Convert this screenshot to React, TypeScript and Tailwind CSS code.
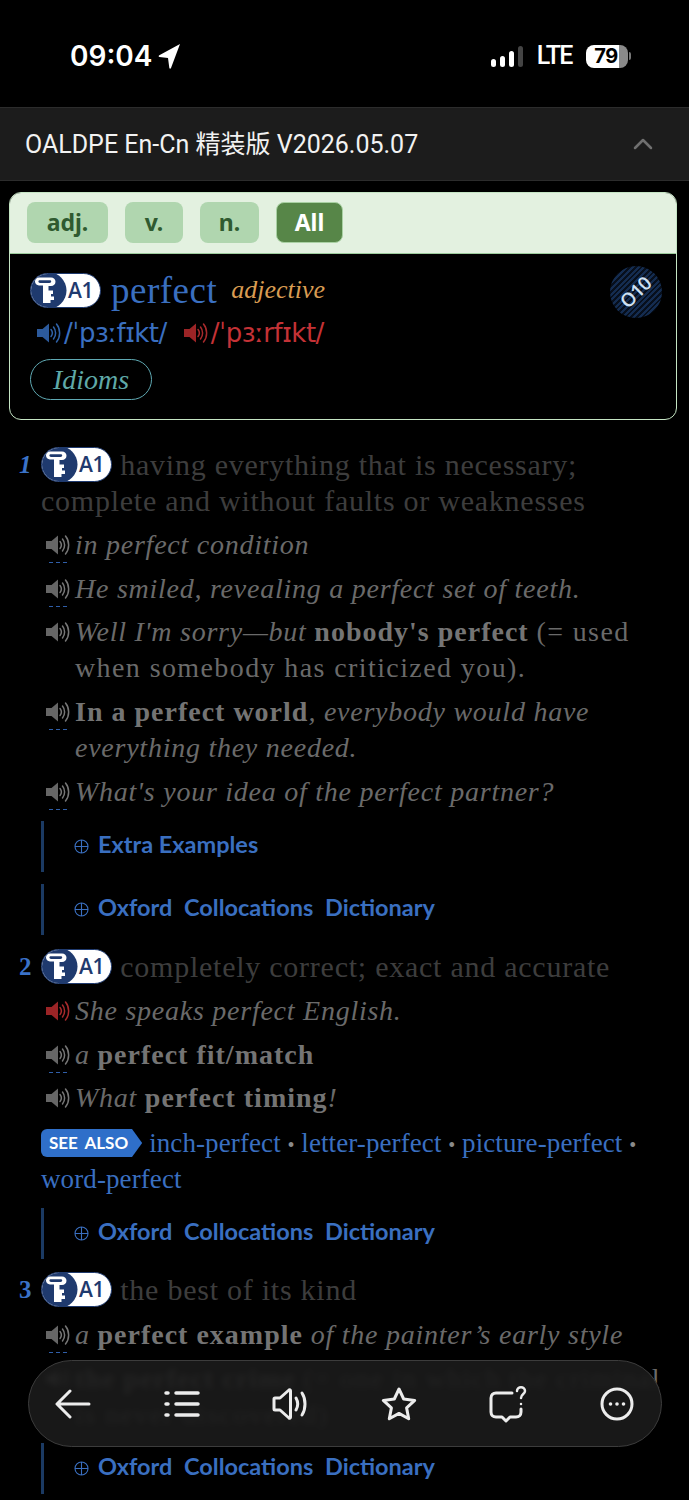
import type { ReactNode } from "react";

const SERIF = "font-['Liberation_Serif','Noto_Serif',serif]";

const Speaker = ({ cone = "#666666", arcs = "#777777" }: { cone?: string; arcs?: string }) => (
  <svg width="26" height="24" viewBox="0 0 26 24" fill="none">
    <path d="M1 8h5.500L13 2.500v19L6.500 16H1z" fill={cone} />
    <path d="M15 8.500c1.600 2 1.600 5 0 7" stroke={arcs} strokeWidth="1.500" strokeLinecap="round" />
    <path d="M17.500 6c2.800 3.400 2.800 8.600 0 12" stroke={arcs} strokeWidth="1.500" strokeLinecap="round" />
    <path d="M20.500 3c4.200 5 4.200 13 0 18" stroke={arcs} strokeWidth="1.500" strokeLinecap="round" />
  </svg>
);

const KeyBadge = () => (
  <span className="inline-block align-[-7px] relative w-[71px] h-[35px] rounded-full bg-white border border-[#1f3a6e] overflow-hidden">
    <svg className="absolute left-0 top-0" width="38" height="33" viewBox="0 0 38 33">
      <circle cx="17" cy="16.500" r="18.500" fill="#1f3a6e" />
      <path
        d="M8 3.500h12c2.600 0 4.500 1.800 4.500 4.200S22.600 12 20 12h-2.500v4.500H22V20h-2v2.500h3V26h-3.500v3H12V11.500H8c-2.300 0-4-1.700-4-3.900s1.700-4.100 4-4.100zm1 2.700c-1 0-1.600.5-1.600 1.400S8 9 9 9h9.500c1.100 0 1.700-.5 1.700-1.400s-.6-1.400-1.700-1.400z"
        fill="#ffffff"
        fillRule="evenodd"
      />
    </svg>
    <span className="absolute left-[37px] top-[3px] font-['Open_Sans',sans-serif] font-semibold text-[21px] leading-[27px] tracking-[-0.5px] text-[#1f3a6e]">
      A1
    </span>
  </span>
);

const Example = ({
  children,
  red,
  dash = true,
  tight,
}: {
  children: ReactNode;
  red?: boolean;
  dash?: boolean;
  tight?: boolean;
}) => (
  <div className={`flex pl-[45px] pr-[20px] ${tight ? "mt-[7px]" : "mt-2"}`}>
    <div className="w-[30px] shrink-0 h-9 flex flex-col">
      <div className="mt-[6px]">
        {red ? <Speaker cone="#9b2426" arcs="#a82a2c" /> : <Speaker />}
      </div>
      {dash && (
        <div className="mt-auto ml-1 flex gap-[3px]">
          <div className="w-[4px] h-px bg-[#2f5ea8]" />
          <div className="w-[4px] h-px bg-[#2f5ea8]" />
          <div className="w-[4px] h-px bg-[#2f5ea8]" />
        </div>
      )}
    </div>
    <p className={`${SERIF} text-[28px] leading-9 italic text-[#6a6a6a] tracking-[0.75px]`}>{children}</p>
  </div>
);

const B = ({ children }: { children: ReactNode }) => (
  <b className="not-italic font-bold text-[#747474] tracking-[1px]">{children}</b>
);

const Gloss = ({ children }: { children: ReactNode }) => (
  <span className="not-italic tracking-[1.4px]">{children}</span>
);

const Sense = ({ n, italicNum, children }: { n: string; italicNum?: boolean; children: ReactNode }) => (
  <div className="flex">
    <div
      className={`w-[41px] shrink-0 pl-[19px] ${SERIF} text-[25px] leading-9 font-bold text-[#3a72c8] ${italicNum ? "italic" : ""}`}
    >
      {n}
    </div>
    <p className={`${SERIF} text-[30px] leading-9 text-[#3d3d3d] tracking-[0.75px] pr-[60px]`}>
      <KeyBadge /> {children}
    </p>
  </div>
);

const Extra = ({ label, tight }: { label: string; tight?: boolean }) => (
  <div className="ml-[41px] h-[51px] border-l-[3px] border-[#1b3a63] flex items-center pl-[30px] pb-[3px]">
    <svg className="mr-[9px] mt-[2px]" width="15" height="15" viewBox="0 0 15 15" fill="none" stroke="#3a6fc0" strokeWidth="1.100">
      <circle cx="7.500" cy="7.500" r="6.500" />
      <path d="M7.500 1v13M1 7.500h13" />
    </svg>
    <span
      className={`font-['Lato',sans-serif] font-bold text-[23.500px] leading-none text-[#3a6fc0] ${
        tight ? "[word-spacing:0px]" : "[word-spacing:6px]"
      }`}
    >
      {label}
    </span>
  </div>
);

const Pill = ({ label, w, active }: { label: string; w: string; active?: boolean }) => (
  <div
    className={`${w} h-[41px] rounded-lg flex items-center justify-center font-['Noto_Sans',sans-serif] font-bold text-[23px] ${
      active ? "bg-[#578648] text-white border border-[#a9d1a3]" : "bg-[#b0d6af] text-[#2f5a30]"
    }`}
  >
    {label}
  </div>
);

const Link = ({ children }: { children: ReactNode }) => (
  <span className="whitespace-nowrap text-[#3a6fc0] tracking-[0.1px]">{children}</span>
);
const Dot = () => <span className="text-[#8a8a8a] text-[20px] leading-none">•</span>;

export default function App() {
  return (
    <div className="relative w-[689px] h-[1500px] overflow-hidden bg-black">
      {/* status bar */}
      <div className="h-[107px] flex items-start justify-between pt-[38px] pl-[70px] pr-[58px]">
        <div className="flex items-center gap-[6px] text-white font-['Inter',sans-serif] font-semibold text-[28px] leading-9">
          09:04
          <svg width="23" height="26" viewBox="0 0 23 26">
            <path d="M22 1 13 25c-.5 1-1.500.8-1.700-.2L10 15 1.500 14c-1-.2-1.200-1.200-.2-1.700z" fill="#ffffff" />
          </svg>
        </div>
        <div className="flex items-center h-9 text-white">
          <div className="flex items-end gap-1 h-[21px] mt-[1px]">
            <div className="w-[5px] h-[8px] rounded-sm bg-white" />
            <div className="w-[5px] h-[11px] rounded-sm bg-white" />
            <div className="w-[5px] h-[16px] rounded-sm bg-white" />
            <div className="w-[5px] h-[21px] rounded-sm bg-[#444444]" />
          </div>
          <span className="ml-[14px] font-['Roboto',sans-serif] font-medium text-[25px] tracking-[-1.5px]">LTE</span>
          <div className="ml-[14px] w-[42px] h-[23px] rounded-[8px] bg-[linear-gradient(90deg,#ffffff_78%,#8a8a8a_78%)] flex items-center justify-center text-black font-['Inter',sans-serif] font-bold text-[20px] tracking-[-0.5px]">
            <span className="mr-[2px]">79</span>
          </div>
          <div className="ml-[1px] w-[2px] h-[8px] rounded-r bg-[#777777]" />
        </div>
      </div>

      {/* dictionary header */}
      <div className="h-[74px] bg-[#1c1c1c] border-y border-[#2c2c2c] flex items-center justify-between pl-[25px] pr-[36px]">
        <span className="mt-[2px] font-['Roboto','Noto_Sans_CJK_SC',sans-serif] text-[25px] text-[#f2f2f2]">
          OALDPE En-Cn 精装版 V2026.05.07
        </span>
        <svg width="20" height="12" viewBox="0 0 20 12" fill="none" stroke="#707070" strokeWidth="2.500" strokeLinecap="round" strokeLinejoin="round">
          <path d="M2 10l8-8 8 8" />
        </svg>
      </div>

      {/* headword card */}
      <div className="mt-[11px] ml-[9px] w-[668px] h-[228px] rounded-xl border border-[#c5e5c4] overflow-hidden">
        <div className="h-[61px] bg-[#e3f1e0] border-b border-[#9ccb9c] flex items-center pl-[17px] pb-[2px] gap-[17px]">
          <Pill label="adj." w="w-[81px]" />
          <Pill label="v." w="w-[58px]" />
          <Pill label="n." w="w-[59px]" />
          <Pill label="All" w="w-[67px]" active />
        </div>
        <div className="relative pl-[20px] pt-[17px]">
          <div className="flex items-center h-[38px]">
            <KeyBadge />
            <span className={`ml-[10px] ${SERIF} text-[37px] leading-none text-[#3a6fc0] tracking-[0.5px]`}>perfect</span>
            <span className={`ml-[14px] ${SERIF} italic text-[26px] leading-none text-[#d99c52]`}>adjective</span>
          </div>
          <div className="flex items-center h-[36px] mt-[6px] font-['DejaVu_Sans',sans-serif] text-[26px] tracking-[-0.5px]">
            <div className="ml-[6px] mr-[2px]">
              <Speaker cone="#2c5a9c" arcs="#2f62a8" />
            </div>
            <span className="text-[#3a6fc0]">/ˈpɜːfɪkt/</span>
            <div className="ml-[16px] mr-[2px]">
              <Speaker cone="#9b2426" arcs="#a82a2c" />
            </div>
            <span className="text-[#c43236]">/ˈpɜːrfɪkt/</span>
          </div>
          <div className={`mt-[8px] w-[122px] h-[41px] rounded-full border-[1.500px] border-[#5fa9b3] flex items-center justify-center ${SERIF} italic text-[28px] text-[#5fa9a8]`}>
            Idioms
          </div>
          <div className="absolute right-[14px] top-[12px] w-[52px] h-[52px] rounded-full bg-[repeating-linear-gradient(135deg,#142c50_0px,#142c50_2px,#070f1c_2px,#070f1c_4px)] flex items-center justify-center">
            <span className="-rotate-45 font-['Open_Sans',sans-serif] font-semibold text-[19px] text-[#cfe0f2] tracking-[-0.5px]">O10</span>
          </div>
        </div>
      </div>

      {/* senses */}
      <div className="mt-[27px]">
        <Sense n="1" italicNum>
          having everything that is necessary; complete and without faults or weaknesses
        </Sense>
        <Example>in perfect condition</Example>
        <Example>He smiled, revealing a perfect set of teeth.</Example>
        <Example dash={false} tight>
          Well I'm sorry—but <B>nobody's perfect</B> <Gloss>(= used when somebody has criticized you).</Gloss>
        </Example>
        <Example>
          <B>In a perfect world</B>, everybody would have everything they needed.
        </Example>
        <Example>What's your idea of the perfect partner?</Example>
        <div className="mt-[11px]">
          <Extra label="Extra Examples" tight />
        </div>
        <div className="mt-3">
          <Extra label="Oxford Collocations Dictionary" />
        </div>

        <div className="mt-[14px]">
          <Sense n="2">completely correct; exact and accurate</Sense>
        </div>
        <Example red dash={false}>She speaks perfect English.</Example>
        <Example>
          a <B>perfect fit/match</B>
        </Example>
        <Example dash={false} tight>
          What <B>perfect timing</B>!
        </Example>
        <div className={`mt-[9px] pl-[41px] pr-[20px] ${SERIF} text-[27px] leading-9`}>
          <span className="inline-block align-top mt-[4px] mr-[7px] h-[28px] pl-[8px] pr-[14px] rounded-l-md bg-[#2f6fc9] [clip-path:polygon(0_0,90%_0,100%_50%,90%_100%,0_100%)] font-['Lato',sans-serif] font-bold text-[17px] leading-[28px] text-white [word-spacing:3px]">
            SEE ALSO
          </span>
          <Link>inch-perfect</Link> <Dot /> <Link>letter-perfect</Link> <Dot /> <Link>picture-perfect</Link> <Dot />{" "}
          <Link>word-perfect</Link>
        </div>
        <div className="mt-[11px]">
          <Extra label="Oxford Collocations Dictionary" />
        </div>

        <div className="mt-[13px]">
          <Sense n="3">the best of its kind</Sense>
        </div>
        <div className="mt-[9px]">
          <Example>
            a <B>perfect example</B> of the painter’s early style
          </Example>
        </div>
        <Example dash={false}>
          <B>the perfect crime</B> <Gloss>(= one in which the criminal is never discovered)</Gloss>
        </Example>
        <div className="mt-[10px]">
          <Extra label="Oxford Collocations Dictionary" />
        </div>
      </div>

      {/* floating toolbar */}
      <div className="absolute left-[28px] top-[1360px] w-[634px] h-[87px] rounded-full bg-[#1b1b1b]/90 backdrop-blur-[3px] border border-[#3c3c3c] flex items-center justify-between pl-[26px] pr-[27px]">
        <svg width="36" height="32" viewBox="0 0 36 32" fill="none" stroke="#ececec" strokeWidth="3" strokeLinecap="round" strokeLinejoin="round">
          <path d="M34 16H3M15 3 2 16l13 13" />
        </svg>
        <svg width="36" height="30" viewBox="0 0 36 30" fill="none" stroke="#ececec" strokeWidth="3.500" strokeLinecap="round">
          <path d="M2 4h2M12 4h22M2 15h2M12 15h22M2 26h2M12 26h22" />
        </svg>
        <svg width="36" height="36" viewBox="0 0 36 36" fill="none" stroke="#ececec" strokeWidth="3" strokeLinecap="round" strokeLinejoin="round">
          <path d="M3 12h5l9-8c.6-.5 1.500 0 1.500.8v26.400c0 .8-.9 1.300-1.500.8l-9-8H3c-.6 0-1-.4-1-1V13c0-.6.4-1 1-1z" />
          <path d="M24 12c2 3.500 2 8.500 0 12M30 7c4 6 4 16 0 22" />
        </svg>
        <svg width="36" height="36" viewBox="0 0 36 36" fill="none" stroke="#ececec" strokeWidth="3" strokeLinejoin="round">
          <path d="M18 3l4.700 10 11 1.400-8.100 7.500 2.100 10.900L18 27.400 8.300 32.800l2.100-10.900-8.100-7.500 11-1.400z" />
        </svg>
        <svg width="38" height="38" viewBox="0 0 38 38" fill="none" stroke="#ececec" strokeWidth="3" strokeLinecap="round" strokeLinejoin="round">
          <path d="M23 8H7C4 8 2 10 2 13v14c0 3 2 5 5 5h6l4 4 4-4h6c3 0 5-2 5-5v-3" />
          <path d="M28 6c0-5 8-5 8 0 0 3-4 3-4 7" strokeWidth="2.500" />
          <path d="M32 19v.1" strokeWidth="2.500" />
        </svg>
        <svg width="34" height="34" viewBox="0 0 34 34" fill="none" stroke="#ececec" strokeWidth="3">
          <circle cx="17" cy="17" r="15" />
          <circle cx="10.500" cy="17" r="1.800" fill="#ececec" stroke="none" />
          <circle cx="17" cy="17" r="1.800" fill="#ececec" stroke="none" />
          <circle cx="23.500" cy="17" r="1.800" fill="#ececec" stroke="none" />
        </svg>
      </div>
    </div>
  );
}
